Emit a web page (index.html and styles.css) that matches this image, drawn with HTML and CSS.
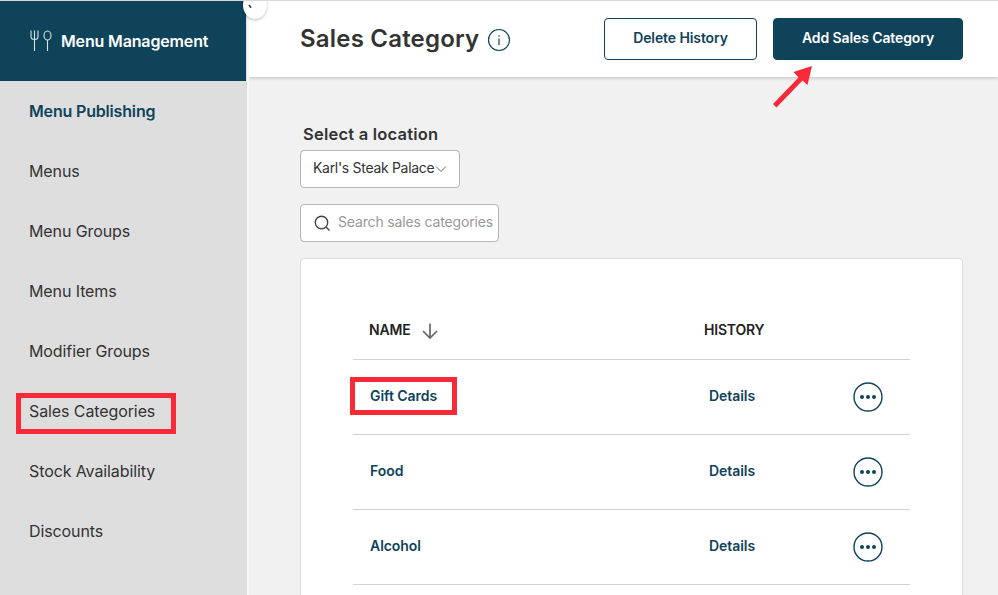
FILE: index.html
```html
<!DOCTYPE html>
<html lang="en">
<head>
<meta charset="utf-8">
<title>Sales Category</title>
<link rel="stylesheet" href="styles.css">
</head>
<body>
<div class="app">
  <aside class="sidebar">
    <div class="brand">
      <svg class="brand-icon" width="22" height="22" viewBox="0 0 22 22"><path d="M1 .5V6.500Q1 9.500 4.500 9.500T8 6.500V.5M4.500.5V21"/><ellipse cx="17.500" cy="5.500" rx="3.500" ry="4.500"/><path d="M17.500 10V21"/></svg>
      <span>Menu Management</span>
    </div>
    <nav class="nav">
      <a class="nav-item active">Menu Publishing</a>
      <a class="nav-item">Menus</a>
      <a class="nav-item">Menu Groups</a>
      <a class="nav-item">Menu Items</a>
      <a class="nav-item">Modifier Groups</a>
      <a class="nav-item"><span class="marked">Sales Categories</span></a>
      <a class="nav-item">Stock Availability</a>
      <a class="nav-item">Discounts</a>
    </nav>
    <div class="collapse"><svg width="8" height="12" viewBox="0 0 8 12"><path d="M3 5 5 7.800"/></svg></div>
  </aside>
  <main class="main">
    <header class="topbar">
      <h1>Sales Category</h1>
      <svg class="info" width="24" height="24" viewBox="0 0 24 24"><circle cx="12" cy="12" r="10.500"/><path d="M12 10.500V17M12 7.200V8.700"/></svg>
      <div class="actions">
        <button class="btn outline">Delete History</button>
        <button class="btn solid">Add Sales Category</button>
      </div>
      <svg class="pointer" width="42" height="44" viewBox="0 0 42 44"><path d="M40 1 35.500 20 30.500 15.500 4.500 42.500 1 39 26.500 12.500 21.500 7Z"/></svg>
    </header>
    <section class="content">
      <div class="label">Select a location</div>
      <div class="select"><span>Karl's Steak Palace</span><svg width="12" height="8" viewBox="0 0 12 8"><path d="M1 1.500 6 6.500 11 1.500"/></svg></div>
      <div class="search"><svg width="17" height="17" viewBox="0 0 17 17"><circle cx="7.500" cy="7.500" r="6.200"/><path d="M12 12 15.500 15.500"/></svg><span>Search sales categories</span></div>
      <div class="card">
        <div class="row head">
          <div class="name">NAME<svg width="18" height="18" viewBox="0 0 18 18"><path d="M9 1.500V16M2 9 9 16 16 9"/></svg></div>
          <div class="history">HISTORY</div>
        </div>
        <div class="row">
          <div class="name"><span class="marked">Gift Cards</span></div><div class="history">Details</div>
          <svg class="more" width="30" height="30" viewBox="0 0 30 30"><circle class="ring" cx="15" cy="15" r="14"/><circle cx="9" cy="15" r="2"/><circle cx="15" cy="15" r="2"/><circle cx="21" cy="15" r="2"/></svg>
        </div>
        <div class="row">
          <div class="name">Food</div><div class="history">Details</div>
          <svg class="more" width="30" height="30" viewBox="0 0 30 30"><circle class="ring" cx="15" cy="15" r="14"/><circle cx="9" cy="15" r="2"/><circle cx="15" cy="15" r="2"/><circle cx="21" cy="15" r="2"/></svg>
        </div>
        <div class="row">
          <div class="name">Alcohol</div><div class="history">Details</div>
          <svg class="more" width="30" height="30" viewBox="0 0 30 30"><circle class="ring" cx="15" cy="15" r="14"/><circle cx="9" cy="15" r="2"/><circle cx="15" cy="15" r="2"/><circle cx="21" cy="15" r="2"/></svg>
        </div>
      </div>
    </section>
  </main>
</div>
</body>
</html>
```
FILE: styles.css
```css
*, *::after { box-sizing: border-box; }
body { margin: 0; font-family: Inter, "Liberation Sans", sans-serif; color: #333; background: #f1f1f1; }
svg { fill: none; flex: none; }
.app { display: flex; height: 595px; overflow: hidden; border-top: 1px solid #d8d8d8; }
.sidebar { position: relative; z-index: 2; width: 249px; flex: none; background: #dedede; border-right: 2px solid #f8f8f8; }
.brand { display: flex; align-items: center; gap: 9px; width: 246px; height: 80px; padding-left: 30px; background: #0e435a; color: #fff; font-size: 16px; font-weight: 600; letter-spacing: -.15px; }
.brand-icon { stroke: #d5e3e8; stroke-width: 1.1; }
.nav-item { display: flex; align-items: center; height: 60px; padding-left: 29px; font-size: 16px; letter-spacing: -.1px; }
.nav-item.active { color: #0e435a; font-weight: 600; letter-spacing: -.17px; }
.nav-item .marked { position: relative; }
.marked::after { content: ""; position: absolute; border: 5px solid #fa2938; }
.nav-item .marked::after { left: -13px; top: -8px; width: 160px; height: 41px; }
.collapse { position: absolute; left: 243px; top: -10px; width: 24px; height: 28px; border-radius: 50%; background: #fff; box-shadow: 0 1px 3px #0004; padding: 9px 0 0 3px; }
.collapse svg { stroke: #333; stroke-width: 1.5; display: block; }
.main { flex: 1; min-width: 0; }
.topbar { position: relative; display: flex; align-items: center; height: 76px; padding: 0 35px 0 51px; background: #fff; box-shadow: 0 1px 4px #0003; }
h1 { margin: -2px 0 0; font-size: 24px; font-weight: 600; letter-spacing: .2px; }
.info { margin-left: 8px; margin-top: 2px; stroke: #0e435a; stroke-width: 1.2; }
.actions { display: flex; gap: 16px; margin-left: auto; }
.btn { height: 42px; padding: 0 0 3px; border: 1px solid #0e435a; border-radius: 4px; font: 600 14px Inter, sans-serif; letter-spacing: -.1px; }
.outline { width: 153px; background: #fff; color: #0e435a; }
.solid { width: 190px; background: #0e435a; color: #fff; }
.pointer { position: absolute; left: 523px; top: 64px; fill: #fa2938; }
.content { padding: 46px 35px 0 51px; }
.label { height: 27px; padding-left: 3px; line-height: 22px; font-size: 16.5px; font-weight: 600; letter-spacing: .21px; }
.select, .search { display: flex; align-items: center; height: 38px; border: 1px solid #b5b5b5; border-radius: 4px; background: #fff; font-size: 14px; }
.select { width: 160px; padding: 0 0 3px 12px; white-space: nowrap; letter-spacing: -.3px; }
.select svg { margin: 3px 0 0 1px; stroke: #666; stroke-width: 1; }
.search { width: 199px; margin-top: 16px; padding: 0 0 3px 13px; gap: 7px; color: #999; white-space: nowrap; letter-spacing: -.15px; }
.search svg { margin-top: 3px; stroke: #444; stroke-width: 1.4; }
.card { height: 360px; margin-top: 16px; padding: 25px 52px 0; background: #fff; border: 1px solid #dcdcdc; border-radius: 4px; }
.row { display: grid; grid-template-columns: 339px 144px 1fr; align-items: center; height: 75px; padding-left: 17px; border-bottom: 1px solid #d2d2d2; color: #0e435a; font-size: 14px; font-weight: 600; }
.row.head { height: 76px; padding-top: 18px; padding-left: 16px; color: #222; }
.name, .history { padding-bottom: 3px; letter-spacing: -.05px; }
.head .name { display: flex; align-items: center; gap: 10px; padding-bottom: 3px; letter-spacing: -.15px; }
.head .name svg { margin-top: 4px; stroke: #666; stroke-width: 1.7; }
.head .history { margin-left: -4px; letter-spacing: -.2px; }
.name .marked { position: relative; }
.name .marked::after { left: -20px; top: -10px; width: 107px; height: 38px; }
.more { fill: #0e435a; }
.more .ring { fill: none; stroke: #0e435a; stroke-width: 1.4; }
```
